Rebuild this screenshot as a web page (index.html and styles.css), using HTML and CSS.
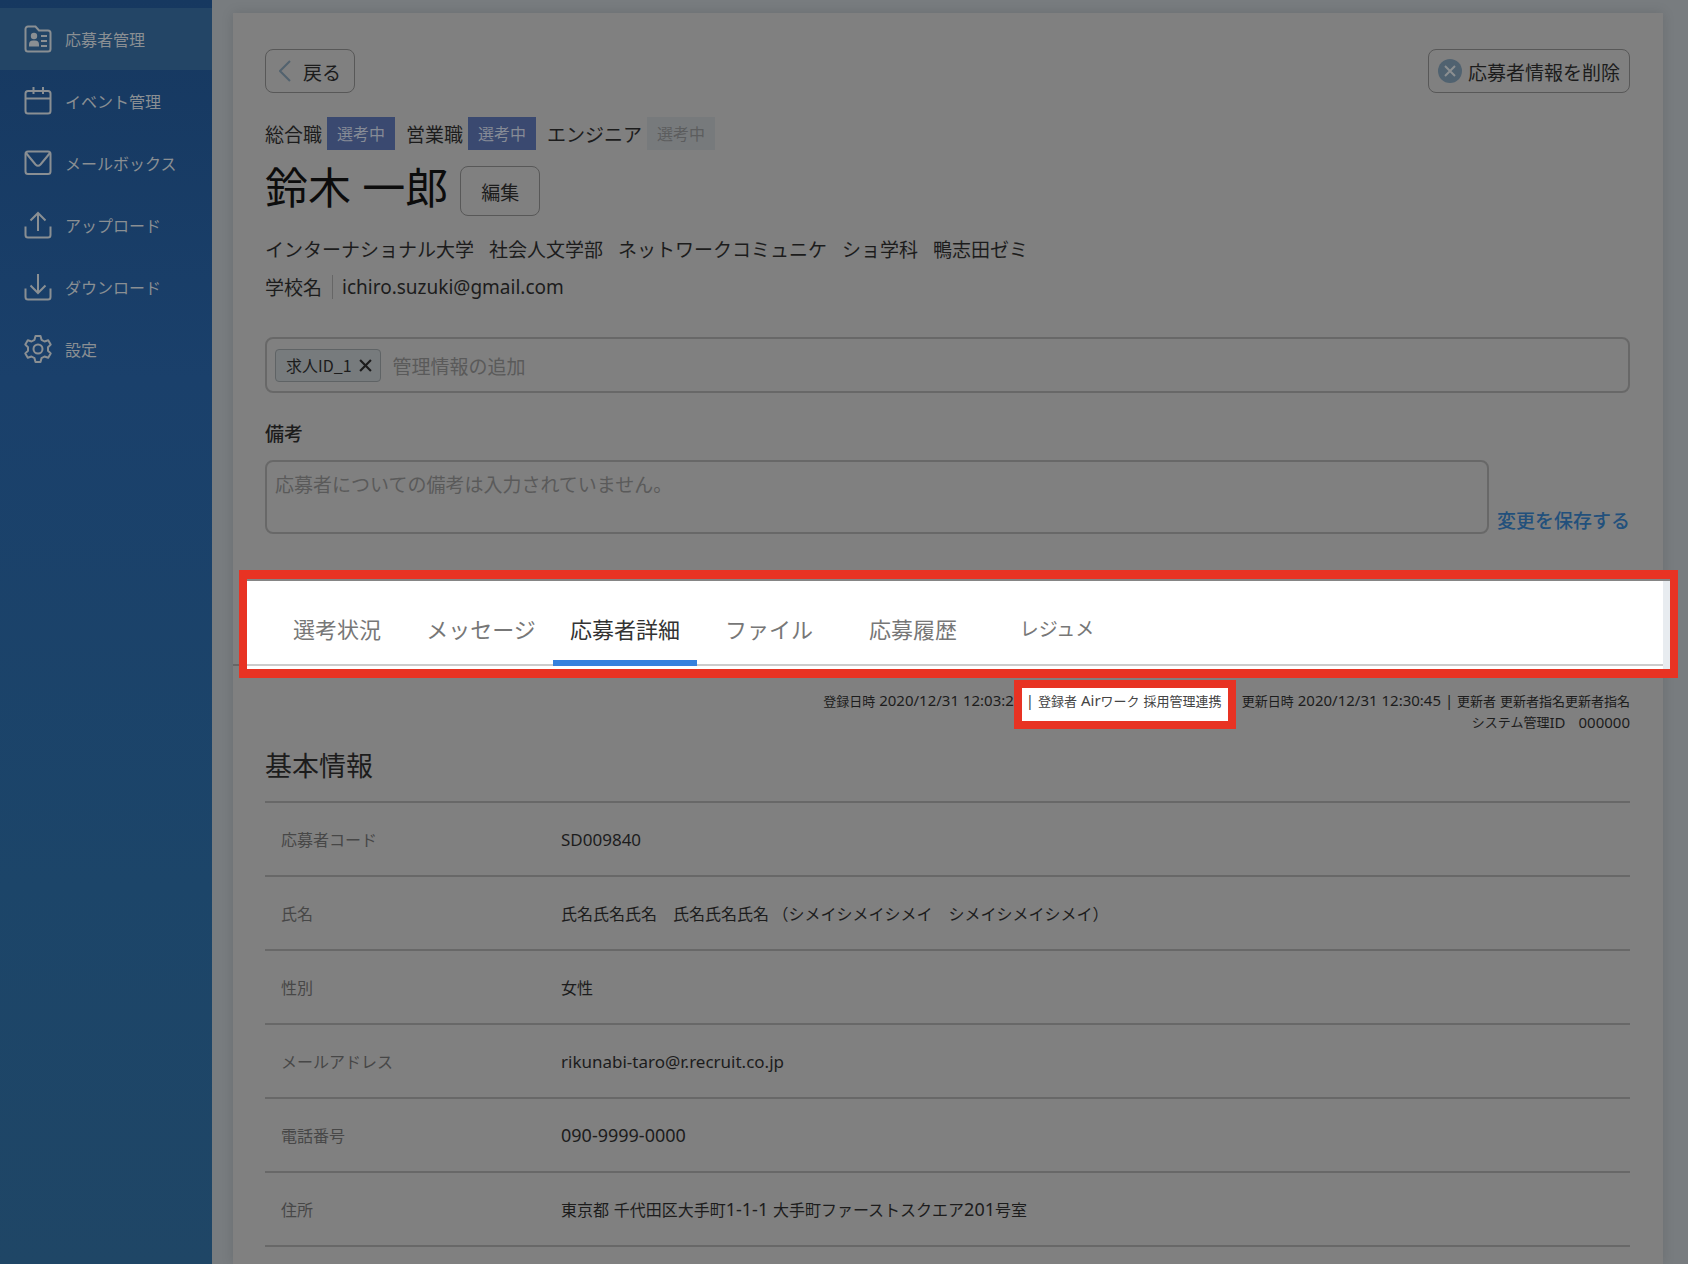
FILE: index.html
```html
<!DOCTYPE html>
<html lang="ja">
<head>
  <meta charset="UTF-8">
  <title>応募者詳細</title>
  <link rel="stylesheet" href="styles.css">
</head>
<body>
  <nav class="sidebar">
    <a href="#" class="menu active">
      <svg viewBox="0 0 28 28"><path d="M4 1.500h7.500l3.500 4H24a2.500 2.500 0 0 1 2.500 2.500v16a2.500 2.500 0 0 1-2.500 2.500H4A2.500 2.500 0 0 1 1.500 24V4A2.500 2.500 0 0 1 4 1.500z"/><path d="M17 11h6M17 16h6M17 21h6"/><circle class="solid" cx="10" cy="11" r="3.200"/><path class="solid" d="M5 21.500v-2a4 4 0 0 1 4-4h2a4 4 0 0 1 4 4v2z"/></svg>
      応募者管理
    </a>
    <a href="#" class="menu">
      <svg viewBox="0 0 28 28"><rect x="1.500" y="4" width="25" height="22.500" rx="2.500"/><path d="M1.500 11.500h25M9.500 0v7M19 0v7"/></svg>
      イベント管理
    </a>
    <a href="#" class="menu">
      <svg viewBox="0 0 28 28"><rect x="1.500" y="2.500" width="25" height="22.500" rx="2.500"/><path d="M2 4l9.500 11.500q2.500 2.500 5 0L26 4"/></svg>
      メールボックス
    </a>
    <a href="#" class="menu">
      <svg viewBox="0 0 28 28"><path d="M1.500 15.500V24A2.500 2.500 0 0 0 4 26.500h20a2.500 2.500 0 0 0 2.500-2.500v-8.500M14 20V2M6.500 9.500L14 2l7.500 7.500"/></svg>
      アップロード
    </a>
    <a href="#" class="menu">
      <svg viewBox="0 0 28 28"><path d="M1.500 15.500V24A2.500 2.500 0 0 0 4 26.500h20a2.500 2.500 0 0 0 2.500-2.500v-8.500M14 1v19M6.500 12.500L14 20l7.500-7.500"/></svg>
      ダウンロード
    </a>
    <a href="#" class="menu">
      <svg viewBox="0 0 28 28"><path stroke-linejoin="round" d="M11.500 1h5l1 3.800 3 1.700 3.700-1.200 2.500 4.300-2.700 2.700v3.400l2.700 2.700-2.500 4.300-3.700-1.200-3 1.700-1 3.800h-5l-1-3.800-3-1.700-3.700 1.200-2.500-4.300L4 15.700v-3.400L1.300 9.600l2.500-4.300 3.700 1.200 3-1.700z"/><circle cx="14" cy="14" r="4.500"/></svg>
      設定
    </a>
  </nav>

  <main class="card">
    <div class="toolbar">
      <button class="btn back"><svg viewBox="0 0 12 22"><path d="M11 1L1 11l10 10"/></svg>戻る</button>
      <button class="btn delete"><svg viewBox="0 0 24 24"><circle cx="12" cy="12" r="12"/><path d="M7 7l10 10M17 7L7 17"/></svg>応募者情報を削除</button>
    </div>

    <ul class="jobs">
      <li>総合職<span class="badge">選考中</span></li>
      <li>営業職<span class="badge">選考中</span></li>
      <li>エンジニア<span class="badge off">選考中</span></li>
    </ul>

    <div class="name">
      <h1>鈴木 一郎</h1>
      <button class="btn edit">編集</button>
    </div>

    <p class="school">
      <span>インターナショナル大学</span>
      <span>社会人文学部</span>
      <span>ネットワークコミュニケ</span>
      <span>ショ学科</span>
      <span>鴨志田ゼミ</span>
    </p>
    <p class="contact">学校名<a href="#">ichiro.suzuki@gmail.com</a></p>

    <div class="field">
      <span class="chip">求人ID_1<button aria-label="削除"><svg viewBox="0 0 12 12"><path d="M1 1l10 10M11 1L1 11"/></svg></button></span>
      <input type="text" aria-label="管理情報" placeholder="管理情報の追加">
    </div>

    <label class="memo-label" for="memo">備考</label>
    <div class="memo">
      <textarea id="memo" placeholder="応募者についての備考は入力されていません。"></textarea>
      <a href="#">変更を保存する</a>
    </div>

    <div class="tabs">
      <div class="tab-list">
        <a href="#">選考状況</a>
        <a href="#">メッセージ</a>
        <a href="#" class="current">応募者詳細</a>
        <a href="#">ファイル</a>
        <a href="#">応募履歴</a>
        <a href="#" class="resume">レジュメ</a>
      </div>
    </div>

    <div class="meta">
      <span>登録日時<span class="num"> 2020/12/31 12:03:2</span></span>
      <span class="creator"><span class="num">| </span>登録者<span class="num"> Air</span>ワーク<span class="num"> </span>採用管理連携</span>
      <span>更新日時<span class="num"> 2020/12/31 12:30:45 | </span>更新者<span class="num"> </span>更新者指名更新者指名</span>
    </div>
    <div class="meta">システム管理<span class="num">ID</span>　<span class="num">000000</span></div>

    <h2>基本情報</h2>
    <table>
      <tr><th>応募者コード</th><td><span class="latin">SD009840</span></td></tr>
      <tr><th>氏名</th><td>氏名氏名氏名　氏名氏名氏名 （シメイシメイシメイ　シメイシメイシメイ）</td></tr>
      <tr><th>性別</th><td>女性</td></tr>
      <tr><th>メールアドレス</th><td><span class="latin">rikunabi-taro@r.recruit.co.jp</span></td></tr>
      <tr><th>電話番号</th><td><span class="digits">090-9999-0000</span></td></tr>
      <tr><th>住所</th><td>東京都<span class="digits"> </span>千代田区大手町<span class="digits">1-1-1 </span>大手町ファーストスクエア<span class="digits">201</span>号室</td></tr>
    </table>
  </main>
</body>
</html>
```
FILE: styles.css
```css
* {
  box-sizing: border-box;
}

body {
  margin: 0;
  min-height: 100vh;
  display: flex;
  background: #787c7f;
  color: #1c1c1c;
  font-family: "Noto Sans CJK JP", sans-serif;
  font-size: 19px;
}

h1, h2, p, ul {
  margin: 0;
  padding: 0;
  font-weight: normal;
}

a {
  text-decoration: none;
  color: inherit;
}

button, input, textarea {
  font: inherit;
  color: inherit;
  background: none;
}

svg {
  fill: none;
  stroke: currentColor;
  stroke-width: 2;
  flex: none;
}

.solid {
  fill: currentColor;
  stroke: none;
}

/* sidebar */
.sidebar {
  width: 212px;
  flex: none;
  padding-top: 8px;
  background: linear-gradient(#163860, #1a406b 30%, #1c4569 70%, #1f4666);
}

.menu {
  display: flex;
  align-items: center;
  gap: 13px;
  height: 62px;
  padding-left: 24px;
  color: #8a8f93;
  font-size: 16px;
}

.menu svg {
  width: 28px;
  height: 28px;
}

.menu.active {
  background: #234566;
}

/* card */
.card {
  flex: 1;
  min-width: 0;
  margin: 13px 25px 0 21px;
  padding: 36px 33px 12px 32px;
  background: #808080;
  box-shadow: 0 0 12px rgba(0, 0, 0, 0.12);
}

.btn {
  display: flex;
  align-items: center;
  justify-content: center;
  height: 44px;
  padding: 0 9px;
  border: 1px solid #585858;
  border-radius: 8px;
}

.toolbar {
  display: flex;
  justify-content: space-between;
}

.back {
  width: 90px;
  gap: 12px;
}

.back svg {
  width: 12px;
  height: 22px;
  color: #52626e;
}

.delete {
  gap: 6px;
}

.delete svg {
  width: 24px;
  height: 24px;
  color: #8c8f91;
}

.delete circle {
  fill: #506270;
  stroke: none;
}

.jobs {
  display: flex;
  gap: 11px;
  margin-top: 24px;
  list-style: none;
}

.jobs li {
  display: flex;
  align-items: center;
  gap: 5px;
}

.badge {
  padding: 0 10px;
  background: #3a4970;
  color: #868b96;
  font-size: 16px;
  line-height: 33px;
}

.badge.off {
  background: #777a7c;
  color: #5c5d5e;
}

.name {
  display: flex;
  gap: 12px;
  margin-top: 16px;
}

.name h1 {
  color: #0c0c0c;
  font-family: "Noto Sans", "Noto Sans CJK JP", sans-serif;
  font-size: 43px;
  line-height: 44px;
}

.edit {
  width: 80px;
  height: 50px;
}

.school {
  display: flex;
  gap: 15px;
  margin-top: 14px;
  line-height: 38px;
}

.contact {
  display: flex;
  align-items: center;
  line-height: 38px;
}

.contact a {
  margin-left: 10px;
  padding-left: 9px;
  border-left: 1px solid #666;
  font-family: "Noto Sans", sans-serif;
  line-height: 24px;
}

.field {
  display: flex;
  align-items: center;
  gap: 12px;
  height: 56px;
  margin-top: 31px;
  padding: 0 8px;
  border: 2px solid #686868;
  border-radius: 8px;
}

.chip {
  display: flex;
  align-items: center;
  gap: 7px;
  height: 33px;
  padding: 0 8px 0 10px;
  border: 1px solid #5f6365;
  border-radius: 4px;
  background: #777b7d;
  font-size: 16px;
}

.chip button {
  display: flex;
  padding: 0;
  border: 0;
}

.chip svg {
  width: 13px;
  height: 13px;
}

.field input {
  flex: 1;
  padding: 0;
  border: 0;
  font-size: 19px;
}

::placeholder {
  color: #5a5a5a;
}

.memo-label {
  display: block;
  margin-top: 26px;
  font-weight: 500;
  line-height: 28px;
}

.memo {
  display: flex;
  align-items: flex-end;
  gap: 8px;
  margin-top: 13px;
}

.memo textarea {
  flex: 1;
  height: 74px;
  padding: 8px;
  border: 2px solid #686868;
  border-radius: 8px;
  line-height: 28px;
  resize: none;
}

.memo a {
  color: #22507c;
  font-weight: 500;
  line-height: 28px;
}

/* tabs, framed in red */
.tabs {
  position: relative;
  height: 108px;
  margin: 36px -48px 0 -26px;
  border: solid #e83323;
  border-width: 9px 8px;
  background: linear-gradient(to left, #e8ecf0 7px, #fff 7px);
  box-shadow: inset 0 2px #858585;
}

/* the rule under the tabs runs on to the card edge */
.tabs::before {
  content: "";
  position: absolute;
  left: -14px;
  top: 85px;
  width: 6px;
  height: 2px;
  background: #666;
}

.tab-list {
  display: flex;
  height: 87px;
  margin-right: 7px;
  padding-left: 18px;
  border-bottom: 2px solid #ccc;
}

.tab-list a {
  width: 144px;
  height: 87px;
  padding-top: 6px;
  border-bottom: 6px solid transparent;
  color: #777;
  font-size: 22px;
  line-height: 86px;
  text-align: center;
}

.tab-list .current {
  border-color: #3681dd;
  color: #333;
}

.tab-list .resume {
  font-size: 19px;
}

.meta {
  display: flex;
  justify-content: flex-end;
  height: 22px;
  font-size: 13px;
  line-height: 22px;
  white-space: pre;
}

.tabs + .meta {
  margin-top: 11px;
}

.num {
  font-family: "Noto Sans", sans-serif;
  font-size: 15px;
}

.creator {
  width: 222px;
  height: 49px;
  margin: -9px 6px 0 0;
  padding: 1px 4px;
  border: 8px solid #e83323;
  background: #fff;
  color: #444;
}

h2 {
  margin-top: 12px;
  font-size: 27px;
  line-height: 40px;
}

table {
  width: 100%;
  margin-top: 16px;
  border-collapse: collapse;
  border-top: 2px solid #686868;
  font-size: 16px;
}

tr {
  height: 74px;
  border-bottom: 2px solid #686868;
}

th {
  width: 296px;
  padding: 0 16px;
  color: #474747;
  font-weight: normal;
  text-align: left;
}

td {
  padding: 0;
}

.latin {
  font-family: "Noto Sans", sans-serif;
  font-size: 17px;
}

.digits {
  font-family: "Noto Sans", sans-serif;
  font-size: 18px;
}
```
